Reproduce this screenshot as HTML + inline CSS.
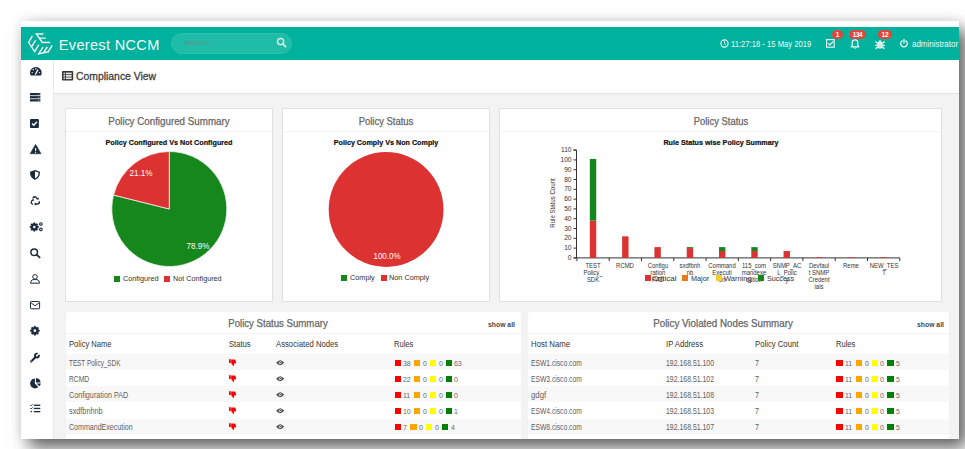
<!DOCTYPE html>
<html><head><meta charset="utf-8"><style>
*{box-sizing:border-box;margin:0;padding:0}
html,body{width:965px;height:449px;overflow:hidden;background:#fff;font-family:"Liberation Sans",sans-serif}
.a{position:absolute}
.nw{white-space:nowrap}
svg.a{overflow:visible}
</style></head><body>
<div class="a" style="left:21px;top:21px;width:938px;height:418px;background:#f3f3f3;box-shadow:8px 9px 16px rgba(0,0,0,0.6),0 0 12px rgba(0,0,0,0.10)"></div>
<div class="a" style="left:21px;top:21px;width:938px;height:6px;background:#fff"></div>
<div class="a" style="left:21px;top:27px;width:938px;height:33px;background:#00b19d"></div>
<div class="a" style="left:21px;top:60px;width:33px;height:379px;background:#fff;border-right:1px solid #e9e9e9"></div>
<div class="a" style="left:54px;top:60px;width:905px;height:34px;background:#fff;border-bottom:1px solid #e3e3e3"></div>
<svg class="a" style="left:26px;top:31px" width="28" height="26" viewBox="0 0 484 449">
 <g fill="none" stroke="#2a5f8a" stroke-width="14" stroke-linecap="butt" opacity=".55">
  <path d="M184 70 L292 214 H410"/>
  <path d="M58 212 L160 365"/>
 </g>
 <g fill="none" stroke="#f4f0f0" stroke-width="24" stroke-linecap="square" stroke-linejoin="miter">
  <path d="M178 52 H290 M178 52 L282 198 H405 M228 122 H330"/>
  <path d="M105 95 L45 200 L150 355 M95 275 L160 170 M150 355 L215 245"/>
  <path d="M215 398 L385 358 M215 398 L290 288 M300 378 L362 285 M385 358 L448 258"/>
 </g>
</svg>
<div class="a nw" style="left:58.8px;top:36px;font-size:14.6px;line-height:18px;color:#f4fbfa;letter-spacing:.29px">Everest NCCM</div>
<div class="a" style="left:171px;top:33px;width:121px;height:21px;border-radius:11px;background:#1fbca8;border:1px solid #2cc2ae"></div>
<div class="a nw" style="left:184px;top:37px;font-size:7.8px;line-height:11px;color:#5f948b">Search...</div>
<svg class="a" style="left:276px;top:37px" width="11" height="11" viewBox="0 0 11 11"><circle cx="4.6" cy="4.6" r="3.1" fill="none" stroke="#cdeee8" stroke-width="1.5"/><path d="M6.8 6.8 L9.6 9.6" stroke="#cdeee8" stroke-width="1.9" stroke-linecap="round"/></svg>
<svg class="a" style="left:720px;top:39px" width="9" height="9" viewBox="0 0 9 9"><circle cx="4.5" cy="4.5" r="3.6" fill="none" stroke="#eef8f6" stroke-width="1.1"/><path d="M4.5 2.3 V4.7 L6 5.9" fill="none" stroke="#eef8f6" stroke-width="1"/></svg>
<div class="a nw" style="left:731px;top:38.5px;font-size:9px;line-height:10px;color:#eef8f6;transform:scaleX(.85);transform-origin:0 0">11:27:18 - 15 May 2019</div>
<svg class="a" style="left:826.3px;top:39px" width="9" height="9" viewBox="0 0 9 9"><rect x=".6" y=".6" width="7.6" height="7.6" fill="none" stroke="#eef8f6" stroke-width="1.1"/><path d="M2.2 4.3 L3.9 5.8 L7.2 2.4" fill="none" stroke="#eef8f6" stroke-width="1.2"/></svg>
<div class="a" style="left:832px;top:30px;width:11px;height:9px;border-radius:5px;background:#e2463a;color:#fff;font-size:6.5px;line-height:9px;text-align:center;font-weight:700">1</div>
<svg class="a" style="left:850px;top:38.5px" width="10" height="10" viewBox="0 0 10 10"><path d="M1.2 7.8 H8.8 L7.8 6.4 V3.8 A2.8 3 0 0 0 2.2 3.8 V6.4 Z" fill="none" stroke="#eef8f6" stroke-width="1.2" stroke-linejoin="round"/><path d="M3.9 8.6 A1.2 1.2 0 0 0 6.1 8.6" fill="none" stroke="#eef8f6" stroke-width="1"/></svg>
<div class="a nw" style="left:849px;top:30px;width:17px;height:9px;border-radius:5px;background:#e2463a;color:#fff;font-size:6.3px;line-height:9px;text-align:center;letter-spacing:-.4px;font-weight:700">134</div>
<svg class="a" style="left:874.5px;top:38.5px" width="10" height="10" viewBox="0 0 10 10"><g fill="#eef8f6"><path d="M2.3 4.2 Q2.3 3 3.6 3 H6.4 Q7.7 3 7.7 4.2 V7.4 Q7.7 9.6 5 9.6 Q2.3 9.6 2.3 7.4 Z"/><path d="M3.2 2.7 Q5 0 6.8 2.7 Z"/></g><g stroke="#eef8f6" stroke-width="1.3"><path d="M0.4 2.6 L2.4 4.2 M9.6 2.6 L7.6 4.2 M0 6.3 H2.4 M10 6.3 H7.6 M0.5 9.6 L2.6 8.2 M9.5 9.6 L7.4 8.2"/></g><path d="M5 4.4 V9.2" stroke="#7fd3c7" stroke-width=".8"/></svg>
<div class="a" style="left:878px;top:30px;width:14px;height:9px;border-radius:5px;background:#e2463a;color:#fff;font-size:6.5px;line-height:9px;text-align:center;font-weight:700">12</div>
<svg class="a" style="left:899px;top:38.2px" width="10" height="10" viewBox="0 0 10 10"><path d="M3.1 2.9 A3.3 3.3 0 1 0 6.9 2.9" fill="none" stroke="#eef8f6" stroke-width="1.3" stroke-linecap="round"/><path d="M5 1.6 V4.9" stroke="#eef8f6" stroke-width="1.3" stroke-linecap="round"/></svg>
<div class="a nw" style="left:912px;top:38.7px;font-size:9px;line-height:10px;color:#eef8f6;transform:scaleX(.885);transform-origin:0 0">administrator</div>
<svg class="a" style="left:29.75px;top:67.1px" width="11.65" height="8.5" viewBox="0 0 11.65 8.5"><path d="M0.72 8.5 A5.8 5.8 0 1 1 10.98 8.5 Z" fill="#1c2b3b"/><g fill="#fff"><circle cx="2.2" cy="5.6" r=".7"/><circle cx="3.2" cy="2.8" r=".7"/><circle cx="5.85" cy="1.7" r=".7"/><circle cx="9.5" cy="5.6" r=".7"/></g><path d="M5.3 7.6 L8 2.6" stroke="#fff" stroke-width="1.2"/></svg>
<svg class="a" style="left:29.75px;top:93px" width="10.35" height="8.5" viewBox="0 0 10.35 8.5"><g fill="#1c2b3b"><rect x="0" y="0" width="10.35" height="2.3"/><rect x="0" y="3.1" width="10.35" height="2.3"/><rect x="0" y="6.2" width="10.35" height="2.3"/></g><g fill="#9aa3ad"><rect x="8.2" y=".7" width="1" height="1"/><rect x="8.2" y="3.8" width="1" height="1"/><rect x="8.2" y="6.9" width="1" height="1"/></g></svg>
<svg class="a" style="left:30px;top:119px" width="8.9" height="8.9" viewBox="0 0 8.9 8.9"><rect x="0" y="0" width="8.9" height="8.9" rx="1" fill="#1c2b3b"/><path d="M2 4.5 L3.8 6.3 L7 2.8" fill="none" stroke="#fff" stroke-width="1.3"/></svg>
<svg class="a" style="left:30px;top:143.75px" width="11.2" height="10" viewBox="0 0 11.2 10"><path d="M5.6 0.3 L11.1 9.8 L0.1 9.8 Z" fill="#1c2b3b" stroke="#1c2b3b" stroke-width=".5" stroke-linejoin="round"/><rect x="5.05" y="4" width="1.1" height="3" fill="#fff"/><rect x="5.05" y="7.8" width="1.1" height="1.1" fill="#fff"/></svg>
<svg class="a" style="left:30.3px;top:169.9px" width="10" height="9.8" viewBox="0 0 10 9.8"><path d="M5 0.7 L9.3 2.2 Q9.4 7.2 5 9.2 Q0.6 7.2 0.7 2.2 Z" fill="none" stroke="#1c2b3b" stroke-width="1.3"/><path d="M5 0.7 L0.7 2.2 Q0.6 7.2 5 9.2 Z" fill="#1c2b3b"/></svg>
<svg class="a" style="left:30px;top:196.25px" width="10.3" height="9.4" viewBox="0 0 10.3 9.4"><g fill="none" stroke="#1c2b3b" stroke-width="1.3" stroke-linecap="round"><path d="M3 1.9 Q4.9 -0.6 6.8 2.3"/><path d="M2.1 4.6 Q0.1 6.9 2.4 8.1"/><path d="M5.8 8 H8 Q9.7 7.6 9.3 5.6"/></g><g fill="#1c2b3b"><path d="M6.0 2.5 L8.8 1.6 L8.3 4.3 Z"/><path d="M0.9 4.4 L3.5 2.5 L3.8 4.9 Z"/><path d="M6.0 6.4 L4.0 8 L6.0 9.6 Z"/></g></svg>
<svg class="a" style="left:29.75px;top:222.3px" width="12.75" height="9.5" viewBox="0 0 12.75 9.5"><path d="M3.22 1.88 L3.55 0.66 L5.05 0.66 L5.38 1.88 L5.74 2.03 L6.84 1.41 L7.89 2.46 L7.27 3.56 L7.42 3.92 L8.64 4.25 L8.64 5.75 L7.42 6.08 L7.27 6.44 L7.89 7.54 L6.84 8.59 L5.74 7.97 L5.38 8.12 L5.05 9.34 L3.55 9.34 L3.22 8.12 L2.86 7.97 L1.76 8.59 L0.71 7.54 L1.33 6.44 L1.18 6.08 L-0.04 5.75 L-0.04 4.25 L1.18 3.92 L1.33 3.56 L0.71 2.46 L1.76 1.41 L2.86 2.03 Z" fill="#1c2b3b" stroke="#1c2b3b" stroke-width=".4" stroke-linejoin="round"/><circle cx="4.3" cy="5.0" r="1.2" fill="#fff"/><g fill="none" stroke="#1c2b3b" stroke-width="1.1"><circle cx="10.9" cy="2" r="1.3"/><circle cx="10.9" cy="7.4" r="1.3"/></g></svg>
<svg class="a" style="left:30px;top:247.9px" width="10.3" height="9.8" viewBox="0 0 10.3 9.8"><circle cx="4.2" cy="4.2" r="3.3" fill="none" stroke="#1c2b3b" stroke-width="1.5"/><path d="M6.6 6.6 L9.6 9.3" stroke="#1c2b3b" stroke-width="1.8" stroke-linecap="round"/></svg>
<svg class="a" style="left:30px;top:274px" width="10.1" height="9.8" viewBox="0 0 10.1 9.8"><g fill="none" stroke="#1c2b3b" stroke-width="1"><circle cx="5.05" cy="2.9" r="2.3"/><path d="M0.6 9.2 Q.6 6 3 5.6 H7.1 Q9.5 6 9.5 9.2 Z"/></g></svg>
<svg class="a" style="left:30px;top:300.8px" width="10.1" height="8.3" viewBox="0 0 10.1 8.3"><g fill="none" stroke="#1c2b3b" stroke-width="1"><rect x=".5" y=".5" width="9.1" height="7.3" rx=".8"/><path d="M.8 1.6 L5.05 4.8 L9.3 1.6"/></g></svg>
<svg class="a" style="left:30.3px;top:326.1px" width="9.8" height="9.4" viewBox="0 0 9.8 9.4"><path d="M3.77 1.39 L4.10 0.17 L5.70 0.17 L6.03 1.39 L6.44 1.56 L7.54 0.93 L8.67 2.06 L8.04 3.16 L8.21 3.57 L9.43 3.90 L9.43 5.50 L8.21 5.83 L8.04 6.24 L8.67 7.34 L7.54 8.47 L6.44 7.84 L6.03 8.01 L5.70 9.23 L4.10 9.23 L3.77 8.01 L3.36 7.84 L2.26 8.47 L1.13 7.34 L1.76 6.24 L1.59 5.83 L0.37 5.50 L0.37 3.90 L1.59 3.57 L1.76 3.16 L1.13 2.06 L2.26 0.93 L3.36 1.56 Z" fill="#1c2b3b" stroke="#1c2b3b" stroke-width=".4" stroke-linejoin="round"/><circle cx="4.9" cy="4.7" r="1.4" fill="#fff"/></svg>
<svg class="a" style="left:30px;top:351.6px" width="10.1" height="10.7" viewBox="0 0 10.1 10.7"><path d="M1.1 9.6 L5.6 5.1" stroke="#1c2b3b" stroke-width="2.1" stroke-linecap="round"/><circle cx="6.9" cy="3.6" r="2.9" fill="#1c2b3b"/><path d="M6.9 3.6 L8.6 -0.2 L10.9 1.9 Z" fill="#fff"/><circle cx="6.9" cy="3.6" r="1.0" fill="#fff"/><circle cx="1.4" cy="9.3" r=".45" fill="#fff"/></svg>
<svg class="a" style="left:30px;top:377.75px" width="11.2" height="10.35" viewBox="0 0 11.2 10.35"><path d="M4.9 0.6 V5.6 L8.3 9.1 A4.9 4.9 0 1 1 4.9 0.6 Z" fill="#1c2b3b"/><path d="M6 0 A5 5 0 0 1 10.6 4.4 H6 Z" fill="#1c2b3b"/><path d="M6.6 5.6 L10.9 5.6 A5 5 0 0 1 9.3 8.3 Z" fill="#1c2b3b"/></svg>
<svg class="a" style="left:30px;top:403.9px" width="10.3" height="8.5" viewBox="0 0 10.3 8.5"><g fill="none" stroke="#1c2b3b" stroke-width=".9"><path d="M.3 1 L1.1 1.8 L2.6 .2"/><path d="M.3 4.2 L1.1 5 L2.6 3.4"/></g><circle cx="1.3" cy="7.6" r=".8" fill="#1c2b3b"/><g fill="#1c2b3b"><rect x="3.8" y=".6" width="6.5" height="1.3"/><rect x="3.8" y="3.8" width="6.5" height="1.3"/><rect x="3.8" y="7" width="6.5" height="1.3"/></g></svg>
<svg class="a" style="left:62.4px;top:71.1px" width="11.2" height="9.6" viewBox="0 0 11.2 9.6"><rect x="0" y="0" width="11.2" height="9.6" rx="1" fill="#333"/><g fill="#e4e4e4"><rect x="1.5" y="1.6" width="1.4" height="1.7"/><rect x="1.5" y="4.0" width="1.4" height="1.7"/><rect x="1.5" y="6.4" width="1.4" height="1.7"/><rect x="3.8" y="1.6" width="5.9" height="1.7"/><rect x="3.8" y="4.0" width="5.9" height="1.7"/><rect x="3.8" y="6.4" width="5.9" height="1.7"/></g></svg>
<div class="a nw" style="left:75.5px;top:70.4px;font-size:10.6px;line-height:12px;color:#3e3e3e;transform:scaleX(0.9809);transform-origin:0 0;-webkit-text-stroke:.3px #3e3e3e">Compliance View</div>
<div class="a" style="left:65px;top:108px;width:208px;height:194px;background:#fff;border:1px solid #e1e1e1;"></div>
<div class="a" style="left:66px;top:131px;width:206px;height:1px;background:#f3f3f3"></div>
<div class="a" style="left:282px;top:108px;width:208px;height:194px;background:#fff;border:1px solid #e1e1e1;"></div>
<div class="a" style="left:283px;top:131px;width:206px;height:1px;background:#f3f3f3"></div>
<div class="a" style="left:499px;top:108px;width:443px;height:194px;background:#fff;border:1px solid #e1e1e1;"></div>
<div class="a" style="left:500px;top:131px;width:441px;height:1px;background:#f3f3f3"></div>
<div class="a nw" style="left:19.25px;top:116.08px;width:300px;text-align:center;font-size:10.2px;line-height:12.239999999999998px;color:#666;font-weight:400;transform:scaleX(0.9603959905952234);-webkit-text-stroke:.25px #666;">Policy Configured Summary</div>
<div class="a nw" style="left:236.39999999999998px;top:116.08px;width:300px;text-align:center;font-size:10.2px;line-height:12.239999999999998px;color:#666;font-weight:400;transform:scaleX(0.9265481560095515);-webkit-text-stroke:.25px #666;">Policy Status</div>
<div class="a nw" style="left:570.5px;top:116.08px;width:300px;text-align:center;font-size:10.2px;line-height:12.239999999999998px;color:#666;font-weight:400;transform:scaleX(0.9265481560095515);-webkit-text-stroke:.25px #666;">Policy Status</div>
<div class="a nw" style="left:18.5px;top:138.68px;width:300px;text-align:center;font-size:7.2px;line-height:8.64px;color:#111;font-weight:700;transform:scaleX(1.0035250555418416);-webkit-text-stroke:.2px #111;">Policy Configured Vs Not Configured</div>
<div class="a nw" style="left:236px;top:138.68px;width:300px;text-align:center;font-size:7.2px;line-height:8.64px;color:#111;font-weight:700;transform:scaleX(0.9990383753919666);-webkit-text-stroke:.2px #111;">Policy Comply Vs Non Comply</div>
<div class="a nw" style="left:570.5px;top:138.68px;width:300px;text-align:center;font-size:7.2px;line-height:8.64px;color:#111;font-weight:700;transform:scaleX(1.0008094526687492);-webkit-text-stroke:.2px #111;">Rule Status wise Policy Summary</div>
<svg class="a" style="left:0;top:0" width="965" height="449" viewBox="0 0 965 449"><path d="M169.3 209.0 L169.3 151.5 A57.5 57.5 0 1 1 113.52 195.05 Z" fill="#15871c" stroke="#f0f0f0" stroke-width=".8"/><path d="M169.3 209.0 L113.52 195.05 A57.5 57.5 0 0 1 169.3 151.5 Z" fill="#dc3232" stroke="#f0f0f0" stroke-width=".8"/><circle cx="386.1" cy="209.5" r="57.4" fill="#dc3232"/></svg>
<div class="a nw" style="left:-9px;top:168.14px;width:300px;text-align:center;font-size:8.6px;line-height:10.319999999999999px;color:#fafafa;font-weight:400;transform:scaleX(0.9536410256410257);">21.1%</div>
<div class="a nw" style="left:47.80000000000001px;top:241.14px;width:300px;text-align:center;font-size:8.6px;line-height:10.319999999999999px;color:#fafafa;font-weight:400;transform:scaleX(0.9413333333333334);">78.9%</div>
<div class="a nw" style="left:236.5px;top:250.94px;width:300px;text-align:center;font-size:8.6px;line-height:10.319999999999999px;color:#fafafa;font-weight:400;transform:scaleX(0.9310182207931403);">100.0%</div>
<div class="a" style="left:114.2px;top:275.6px;width:6px;height:6px;background:#15871c"></div>
<div class="a nw" style="left:122.6px;top:274.58px;font-size:7.2px;line-height:8.64px;color:#333;font-weight:400;transform:scaleX(1.0104664593513994);transform-origin:0 50%;">Configured</div>
<div class="a" style="left:164px;top:275.6px;width:6px;height:6px;background:#dc3232"></div>
<div class="a nw" style="left:173.3px;top:274.58px;font-size:7.2px;line-height:8.64px;color:#333;font-weight:400;transform:scaleX(1.0061279896574014);transform-origin:0 50%;">Not Configured</div>
<div class="a" style="left:341px;top:275.3px;width:6px;height:6px;background:#15871c"></div>
<div class="a nw" style="left:350.2px;top:274.28px;font-size:7.2px;line-height:8.64px;color:#333;font-weight:400;transform:scaleX(1.014974358974359);transform-origin:0 50%;">Comply</div>
<div class="a" style="left:380.6px;top:275.3px;width:6px;height:6px;background:#dc3232"></div>
<div class="a nw" style="left:389.0px;top:274.28px;font-size:7.2px;line-height:8.64px;color:#333;font-weight:400;transform:scaleX(1.0149980244962467);transform-origin:0 50%;">Non Comply</div>
<svg class="a" style="left:0;top:0" width="965" height="449" viewBox="0 0 965 449"><path d="M573.5 150.10 H576.5 V257.90 H573.5" fill="none" stroke="#333" stroke-width="1"/><path d="M573.5 257.90 H576.5" stroke="#333" stroke-width="1"/><path d="M573.5 248.10 H576.5" stroke="#333" stroke-width="1"/><path d="M573.5 238.30 H576.5" stroke="#333" stroke-width="1"/><path d="M573.5 228.50 H576.5" stroke="#333" stroke-width="1"/><path d="M573.5 218.70 H576.5" stroke="#333" stroke-width="1"/><path d="M573.5 208.90 H576.5" stroke="#333" stroke-width="1"/><path d="M573.5 199.10 H576.5" stroke="#333" stroke-width="1"/><path d="M573.5 189.30 H576.5" stroke="#333" stroke-width="1"/><path d="M573.5 179.50 H576.5" stroke="#333" stroke-width="1"/><path d="M573.5 169.70 H576.5" stroke="#333" stroke-width="1"/><path d="M573.5 159.90 H576.5" stroke="#333" stroke-width="1"/><path d="M573.5 150.10 H576.5" stroke="#333" stroke-width="1"/><path d="M576.90 261.10 V257.90 H899.80 V261.10" fill="none" stroke="#333" stroke-width="1"/><path d="M609.19 257.90 V261.10" stroke="#333" stroke-width="1"/><path d="M641.48 257.90 V261.10" stroke="#333" stroke-width="1"/><path d="M673.77 257.90 V261.10" stroke="#333" stroke-width="1"/><path d="M706.06 257.90 V261.10" stroke="#333" stroke-width="1"/><path d="M738.35 257.90 V261.10" stroke="#333" stroke-width="1"/><path d="M770.64 257.90 V261.10" stroke="#333" stroke-width="1"/><path d="M802.93 257.90 V261.10" stroke="#333" stroke-width="1"/><path d="M835.22 257.90 V261.10" stroke="#333" stroke-width="1"/><path d="M867.51 257.90 V261.10" stroke="#333" stroke-width="1"/><rect x="589.84" y="220.66" width="6.4" height="37.24" fill="#dc3232"/><rect x="589.84" y="158.92" width="6.4" height="61.74" fill="#15871c"/><rect x="622.13" y="236.34" width="6.4" height="21.56" fill="#dc3232"/><rect x="654.42" y="247.12" width="6.4" height="10.78" fill="#dc3232"/><rect x="686.71" y="248.10" width="6.4" height="9.80" fill="#dc3232"/><rect x="686.71" y="247.12" width="6.4" height="0.98" fill="#15871c"/><rect x="719.00" y="251.04" width="6.4" height="6.86" fill="#dc3232"/><rect x="719.00" y="247.12" width="6.4" height="3.92" fill="#15871c"/><rect x="751.29" y="251.04" width="6.4" height="6.86" fill="#dc3232"/><rect x="751.29" y="247.12" width="6.4" height="3.92" fill="#15871c"/><rect x="783.58" y="251.04" width="6.4" height="6.86" fill="#dc3232"/><rect x="815.87" y="257.12" width="6.4" height="0.78" fill="#dc3232"/><rect x="848.16" y="257.31" width="6.4" height="0.59" fill="#dc3232"/><rect x="880.45" y="257.31" width="6.4" height="0.59" fill="#dc3232"/></svg>
<div class="a nw" style="left:522px;top:253.90px;width:49.5px;text-align:right;font-size:6.6px;line-height:8px;color:#333">0</div>
<div class="a nw" style="left:522px;top:244.10px;width:49.5px;text-align:right;font-size:6.6px;line-height:8px;color:#333">10</div>
<div class="a nw" style="left:522px;top:234.30px;width:49.5px;text-align:right;font-size:6.6px;line-height:8px;color:#333">20</div>
<div class="a nw" style="left:522px;top:224.50px;width:49.5px;text-align:right;font-size:6.6px;line-height:8px;color:#333">30</div>
<div class="a nw" style="left:522px;top:214.70px;width:49.5px;text-align:right;font-size:6.6px;line-height:8px;color:#333">40</div>
<div class="a nw" style="left:522px;top:204.90px;width:49.5px;text-align:right;font-size:6.6px;line-height:8px;color:#333">50</div>
<div class="a nw" style="left:522px;top:195.10px;width:49.5px;text-align:right;font-size:6.6px;line-height:8px;color:#333">60</div>
<div class="a nw" style="left:522px;top:185.30px;width:49.5px;text-align:right;font-size:6.6px;line-height:8px;color:#333">70</div>
<div class="a nw" style="left:522px;top:175.50px;width:49.5px;text-align:right;font-size:6.6px;line-height:8px;color:#333">80</div>
<div class="a nw" style="left:522px;top:165.70px;width:49.5px;text-align:right;font-size:6.6px;line-height:8px;color:#333">90</div>
<div class="a nw" style="left:522px;top:155.90px;width:49.5px;text-align:right;font-size:6.6px;line-height:8px;color:#333">100</div>
<div class="a nw" style="left:522px;top:146.10px;width:49.5px;text-align:right;font-size:6.6px;line-height:8px;color:#333">110</div>
<div class="a nw" style="left:513.1px;top:199.1px;width:80px;text-align:center;font-size:6.6px;line-height:8px;color:#333;transform:rotate(-90deg) scaleX(0.9249)">Rule Status Count</div>
<div class="a nw" style="left:443.04499999999996px;top:261.60px;width:300px;text-align:center;font-size:6.6px;line-height:8px;color:#333;font-weight:400;transform:scaleX(0.9);">TEST</div>
<div class="a nw" style="left:443.04499999999996px;top:268.60px;width:300px;text-align:center;font-size:6.6px;line-height:8px;color:#333;font-weight:400;transform:scaleX(0.9);">Policy_</div>
<div class="a nw" style="left:443.04499999999996px;top:275.60px;width:300px;text-align:center;font-size:6.6px;line-height:8px;color:#333;font-weight:400;transform:scaleX(0.9);">SDK</div>
<div class="a nw" style="left:475.33500000000004px;top:261.60px;width:300px;text-align:center;font-size:6.6px;line-height:8px;color:#333;font-weight:400;transform:scaleX(0.9);">RCMD</div>
<div class="a nw" style="left:507.625px;top:261.60px;width:300px;text-align:center;font-size:6.6px;line-height:8px;color:#333;font-weight:400;transform:scaleX(0.9);">Configu</div>
<div class="a nw" style="left:507.625px;top:268.60px;width:300px;text-align:center;font-size:6.6px;line-height:8px;color:#333;font-weight:400;transform:scaleX(0.9);">ration</div>
<div class="a nw" style="left:507.625px;top:275.60px;width:300px;text-align:center;font-size:6.6px;line-height:8px;color:#333;font-weight:400;transform:scaleX(0.9);">PAD</div>
<div class="a nw" style="left:539.915px;top:261.60px;width:300px;text-align:center;font-size:6.6px;line-height:8px;color:#333;font-weight:400;transform:scaleX(0.9);">sxdfbnh</div>
<div class="a nw" style="left:539.915px;top:268.60px;width:300px;text-align:center;font-size:6.6px;line-height:8px;color:#333;font-weight:400;transform:scaleX(0.9);">nb</div>
<div class="a nw" style="left:572.2049999999999px;top:261.60px;width:300px;text-align:center;font-size:6.6px;line-height:8px;color:#333;font-weight:400;transform:scaleX(0.9);">Command</div>
<div class="a nw" style="left:572.2049999999999px;top:268.60px;width:300px;text-align:center;font-size:6.6px;line-height:8px;color:#333;font-weight:400;transform:scaleX(0.9);">Executi</div>
<div class="a nw" style="left:572.2049999999999px;top:275.60px;width:300px;text-align:center;font-size:6.6px;line-height:8px;color:#333;font-weight:400;transform:scaleX(0.9);">on</div>
<div class="a nw" style="left:604.495px;top:261.60px;width:300px;text-align:center;font-size:6.6px;line-height:8px;color:#333;font-weight:400;transform:scaleX(0.9);">115_com</div>
<div class="a nw" style="left:604.495px;top:268.60px;width:300px;text-align:center;font-size:6.6px;line-height:8px;color:#333;font-weight:400;transform:scaleX(0.9);">mandexe</div>
<div class="a nw" style="left:604.495px;top:275.60px;width:300px;text-align:center;font-size:6.6px;line-height:8px;color:#333;font-weight:400;transform:scaleX(0.9);">cution</div>
<div class="a nw" style="left:636.785px;top:261.60px;width:300px;text-align:center;font-size:6.6px;line-height:8px;color:#333;font-weight:400;transform:scaleX(0.9);">SNMP_AC</div>
<div class="a nw" style="left:636.785px;top:268.60px;width:300px;text-align:center;font-size:6.6px;line-height:8px;color:#333;font-weight:400;transform:scaleX(0.9);">L_Polic</div>
<div class="a nw" style="left:636.785px;top:275.60px;width:300px;text-align:center;font-size:6.6px;line-height:8px;color:#333;font-weight:400;transform:scaleX(0.9);">y</div>
<div class="a nw" style="left:669.0749999999999px;top:261.60px;width:300px;text-align:center;font-size:6.6px;line-height:8px;color:#333;font-weight:400;transform:scaleX(0.9);">Devfaul</div>
<div class="a nw" style="left:669.0749999999999px;top:268.60px;width:300px;text-align:center;font-size:6.6px;line-height:8px;color:#333;font-weight:400;transform:scaleX(0.9);">t SNMP</div>
<div class="a nw" style="left:669.0749999999999px;top:275.60px;width:300px;text-align:center;font-size:6.6px;line-height:8px;color:#333;font-weight:400;transform:scaleX(0.9);">Credent</div>
<div class="a nw" style="left:669.0749999999999px;top:282.60px;width:300px;text-align:center;font-size:6.6px;line-height:8px;color:#333;font-weight:400;transform:scaleX(0.9);">ials</div>
<div class="a nw" style="left:701.365px;top:261.60px;width:300px;text-align:center;font-size:6.6px;line-height:8px;color:#333;font-weight:400;transform:scaleX(0.9);">Reme</div>
<div class="a nw" style="left:733.655px;top:261.60px;width:300px;text-align:center;font-size:6.6px;line-height:8px;color:#333;font-weight:400;transform:scaleX(0.9);">NEW_TES</div>
<div class="a nw" style="left:733.655px;top:268.60px;width:300px;text-align:center;font-size:6.6px;line-height:8px;color:#333;font-weight:400;transform:scaleX(0.9);">T</div>
<div class="a" style="left:645px;top:275.0px;width:6px;height:6px;background:#dc3232"></div>
<div class="a" style="left:682.1px;top:275.0px;width:6px;height:6px;background:#e8771e"></div>
<div class="a" style="left:715.7px;top:275.0px;width:6px;height:6px;background:#f5cf2a"></div>
<div class="a" style="left:757.7px;top:275.0px;width:6px;height:6px;background:#15871c"></div>
<div class="a nw" style="left:652.0px;top:273.50px;font-size:8px;line-height:9.6px;color:#333;font-weight:400;transform:scaleX(1.0060063897763578);transform-origin:0 50%;">Critical</div>
<div class="a nw" style="left:691.0px;top:273.50px;font-size:8px;line-height:9.6px;color:#333;font-weight:400;transform:scaleX(0.9042935206869633);transform-origin:0 50%;">Major</div>
<div class="a nw" style="left:724.0px;top:273.50px;font-size:8px;line-height:9.6px;color:#333;font-weight:400;transform:scaleX(0.9355932203389831);transform-origin:0 50%;">Warning</div>
<div class="a nw" style="left:767.0px;top:273.50px;font-size:8px;line-height:9.6px;color:#333;font-weight:400;transform:scaleX(0.8963307493540053);transform-origin:0 50%;">Success</div>
<div class="a" style="left:65.5px;top:311.5px;width:455.5px;height:127.5px;background:#fff;border-radius:2px 2px 0 0;box-shadow:0 0 1px rgba(0,0,0,.06)"></div>
<div class="a" style="left:65.5px;top:333px;width:455.5px;height:1px;background:#f3f3f3"></div>
<div class="a nw" style="left:127.60000000000002px;top:318.18px;width:300px;text-align:center;font-size:10.2px;line-height:12.239999999999998px;color:#666;font-weight:400;transform:scaleX(0.9454243323442136);-webkit-text-stroke:.25px #666;">Policy Status Summary</div>
<div class="a nw" style="left:487.8px;top:321.20px;font-size:7px;line-height:8.4px;color:#484848;font-weight:700;transform:scaleX(0.9746606334841628);transform-origin:0 50%;">show all</div>
<div class="a nw" style="left:69.0px;top:339.08px;font-size:9.2px;line-height:11.04px;color:#333;font-weight:400;transform:scaleX(0.825737655255983);transform-origin:0 50%;">Policy Name</div>
<div class="a nw" style="left:228.5px;top:339.08px;font-size:9.2px;line-height:11.04px;color:#333;font-weight:400;transform:scaleX(0.8327294541091782);transform-origin:0 50%;">Status</div>
<div class="a nw" style="left:275.5px;top:339.08px;font-size:9.2px;line-height:11.04px;color:#333;font-weight:400;transform:scaleX(0.8396962025316456);transform-origin:0 50%;">Associated Nodes</div>
<div class="a nw" style="left:394.0px;top:339.08px;font-size:9.2px;line-height:11.04px;color:#333;font-weight:400;transform:scaleX(0.8208510638297873);transform-origin:0 50%;">Rules</div>
<div class="a" style="left:65.5px;top:354.30px;width:455.5px;height:16.05px;background:#f8f8f8"></div>
<div class="a nw" style="left:69.0px;top:358.14px;font-size:8.6px;line-height:10.319999999999999px;color:#5e5e5e;font-weight:400;transform:scaleX(0.7393846844823715);transform-origin:0 50%;">TEST Policy_SDK</div>
<svg class="a" style="left:229px;top:358.70px" width="7.4" height="7.2" viewBox="0 0 7.4 7.2"><rect x="0" y=".2" width="1.8" height="3.8" fill="#f00"/><path d="M2.2 .4 H5.6 Q6.4 .4 6.5 1.2 L7.2 3.6 Q7.3 4.4 6.5 4.4 H4.9 L5.1 6.3 Q5 7.2 4.3 7 L2.2 4.3 Z" fill="#f00"/></svg>
<svg class="a" style="left:275.9px;top:359.50px" width="8.4" height="5.6" viewBox="0 0 8.4 5.6"><path d="M.2 2.8 Q4.2 -2.2 8.2 2.8 Q4.2 7.8 .2 2.8 Z" fill="#444"/><circle cx="4.2" cy="2.8" r="1.5" fill="#fff"/><circle cx="4.2" cy="2.8" r=".8" fill="#444"/></svg>
<div class="a" style="left:394.5px;top:359.7px;width:6.3px;height:6.3px;background:#ff0000"></div>
<div class="a nw" style="left:403.3px;top:358.70px;font-size:8px;line-height:9.6px;color:#666;font-weight:400;transform:scaleX(0.87);transform-origin:0 50%;">38</div>
<div class="a" style="left:414.1px;top:359.7px;width:6.3px;height:6.3px;background:#ffa500"></div>
<div class="a nw" style="left:422.90000000000003px;top:358.70px;font-size:8px;line-height:9.6px;color:#666;font-weight:400;transform:scaleX(0.87);transform-origin:0 50%;">0</div>
<div class="a" style="left:429.85px;top:359.7px;width:6.3px;height:6.3px;background:#ffff00"></div>
<div class="a nw" style="left:438.65000000000003px;top:358.70px;font-size:8px;line-height:9.6px;color:#666;font-weight:400;transform:scaleX(0.87);transform-origin:0 50%;">0</div>
<div class="a" style="left:445.6px;top:359.7px;width:6.3px;height:6.3px;background:#008000"></div>
<div class="a nw" style="left:454.40000000000003px;top:358.70px;font-size:8px;line-height:9.6px;color:#666;font-weight:400;transform:scaleX(0.87);transform-origin:0 50%;">63</div>
<div class="a nw" style="left:69.0px;top:374.19px;font-size:8.6px;line-height:10.319999999999999px;color:#5e5e5e;font-weight:400;transform:scaleX(0.7852606060606061);transform-origin:0 50%;">RCMD</div>
<svg class="a" style="left:229px;top:374.75px" width="7.4" height="7.2" viewBox="0 0 7.4 7.2"><rect x="0" y=".2" width="1.8" height="3.8" fill="#f00"/><path d="M2.2 .4 H5.6 Q6.4 .4 6.5 1.2 L7.2 3.6 Q7.3 4.4 6.5 4.4 H4.9 L5.1 6.3 Q5 7.2 4.3 7 L2.2 4.3 Z" fill="#f00"/></svg>
<svg class="a" style="left:275.9px;top:375.55px" width="8.4" height="5.6" viewBox="0 0 8.4 5.6"><path d="M.2 2.8 Q4.2 -2.2 8.2 2.8 Q4.2 7.8 .2 2.8 Z" fill="#444"/><circle cx="4.2" cy="2.8" r="1.5" fill="#fff"/><circle cx="4.2" cy="2.8" r=".8" fill="#444"/></svg>
<div class="a" style="left:394.5px;top:375.75px;width:6.3px;height:6.3px;background:#ff0000"></div>
<div class="a nw" style="left:403.3px;top:374.75px;font-size:8px;line-height:9.6px;color:#666;font-weight:400;transform:scaleX(0.87);transform-origin:0 50%;">22</div>
<div class="a" style="left:414.1px;top:375.75px;width:6.3px;height:6.3px;background:#ffa500"></div>
<div class="a nw" style="left:422.90000000000003px;top:374.75px;font-size:8px;line-height:9.6px;color:#666;font-weight:400;transform:scaleX(0.87);transform-origin:0 50%;">0</div>
<div class="a" style="left:429.85px;top:375.75px;width:6.3px;height:6.3px;background:#ffff00"></div>
<div class="a nw" style="left:438.65000000000003px;top:374.75px;font-size:8px;line-height:9.6px;color:#666;font-weight:400;transform:scaleX(0.87);transform-origin:0 50%;">0</div>
<div class="a" style="left:445.6px;top:375.75px;width:6.3px;height:6.3px;background:#008000"></div>
<div class="a nw" style="left:454.40000000000003px;top:374.75px;font-size:8px;line-height:9.6px;color:#666;font-weight:400;transform:scaleX(0.87);transform-origin:0 50%;">0</div>
<div class="a" style="left:65.5px;top:386.40px;width:455.5px;height:16.05px;background:#f8f8f8"></div>
<div class="a nw" style="left:69.0px;top:390.24px;font-size:8.6px;line-height:10.319999999999999px;color:#5e5e5e;font-weight:400;transform:scaleX(0.839796234772979);transform-origin:0 50%;">Configuration PAD</div>
<svg class="a" style="left:229px;top:390.80px" width="7.4" height="7.2" viewBox="0 0 7.4 7.2"><rect x="0" y=".2" width="1.8" height="3.8" fill="#f00"/><path d="M2.2 .4 H5.6 Q6.4 .4 6.5 1.2 L7.2 3.6 Q7.3 4.4 6.5 4.4 H4.9 L5.1 6.3 Q5 7.2 4.3 7 L2.2 4.3 Z" fill="#f00"/></svg>
<svg class="a" style="left:275.9px;top:391.60px" width="8.4" height="5.6" viewBox="0 0 8.4 5.6"><path d="M.2 2.8 Q4.2 -2.2 8.2 2.8 Q4.2 7.8 .2 2.8 Z" fill="#444"/><circle cx="4.2" cy="2.8" r="1.5" fill="#fff"/><circle cx="4.2" cy="2.8" r=".8" fill="#444"/></svg>
<div class="a" style="left:394.5px;top:391.8px;width:6.3px;height:6.3px;background:#ff0000"></div>
<div class="a nw" style="left:403.3px;top:390.80px;font-size:8px;line-height:9.6px;color:#666;font-weight:400;transform:scaleX(0.87);transform-origin:0 50%;">11</div>
<div class="a" style="left:414.1px;top:391.8px;width:6.3px;height:6.3px;background:#ffa500"></div>
<div class="a nw" style="left:422.90000000000003px;top:390.80px;font-size:8px;line-height:9.6px;color:#666;font-weight:400;transform:scaleX(0.87);transform-origin:0 50%;">0</div>
<div class="a" style="left:429.85px;top:391.8px;width:6.3px;height:6.3px;background:#ffff00"></div>
<div class="a nw" style="left:438.65000000000003px;top:390.80px;font-size:8px;line-height:9.6px;color:#666;font-weight:400;transform:scaleX(0.87);transform-origin:0 50%;">0</div>
<div class="a" style="left:445.6px;top:391.8px;width:6.3px;height:6.3px;background:#008000"></div>
<div class="a nw" style="left:454.40000000000003px;top:390.80px;font-size:8px;line-height:9.6px;color:#666;font-weight:400;transform:scaleX(0.87);transform-origin:0 50%;">0</div>
<div class="a nw" style="left:69.0px;top:406.29px;font-size:8.6px;line-height:10.319999999999999px;color:#5e5e5e;font-weight:400;transform:scaleX(0.848081922016542);transform-origin:0 50%;">sxdfbnhnb</div>
<svg class="a" style="left:229px;top:406.85px" width="7.4" height="7.2" viewBox="0 0 7.4 7.2"><rect x="0" y=".2" width="1.8" height="3.8" fill="#f00"/><path d="M2.2 .4 H5.6 Q6.4 .4 6.5 1.2 L7.2 3.6 Q7.3 4.4 6.5 4.4 H4.9 L5.1 6.3 Q5 7.2 4.3 7 L2.2 4.3 Z" fill="#f00"/></svg>
<svg class="a" style="left:275.9px;top:407.65px" width="8.4" height="5.6" viewBox="0 0 8.4 5.6"><path d="M.2 2.8 Q4.2 -2.2 8.2 2.8 Q4.2 7.8 .2 2.8 Z" fill="#444"/><circle cx="4.2" cy="2.8" r="1.5" fill="#fff"/><circle cx="4.2" cy="2.8" r=".8" fill="#444"/></svg>
<div class="a" style="left:394.5px;top:407.85px;width:6.3px;height:6.3px;background:#ff0000"></div>
<div class="a nw" style="left:403.3px;top:406.85px;font-size:8px;line-height:9.6px;color:#666;font-weight:400;transform:scaleX(0.87);transform-origin:0 50%;">10</div>
<div class="a" style="left:414.1px;top:407.85px;width:6.3px;height:6.3px;background:#ffa500"></div>
<div class="a nw" style="left:422.90000000000003px;top:406.85px;font-size:8px;line-height:9.6px;color:#666;font-weight:400;transform:scaleX(0.87);transform-origin:0 50%;">0</div>
<div class="a" style="left:429.85px;top:407.85px;width:6.3px;height:6.3px;background:#ffff00"></div>
<div class="a nw" style="left:438.65000000000003px;top:406.85px;font-size:8px;line-height:9.6px;color:#666;font-weight:400;transform:scaleX(0.87);transform-origin:0 50%;">0</div>
<div class="a" style="left:445.6px;top:407.85px;width:6.3px;height:6.3px;background:#008000"></div>
<div class="a nw" style="left:454.40000000000003px;top:406.85px;font-size:8px;line-height:9.6px;color:#666;font-weight:400;transform:scaleX(0.87);transform-origin:0 50%;">1</div>
<div class="a" style="left:65.5px;top:418.50px;width:455.5px;height:16.05px;background:#f8f8f8"></div>
<div class="a nw" style="left:69.0px;top:422.34px;font-size:8.6px;line-height:10.319999999999999px;color:#5e5e5e;font-weight:400;transform:scaleX(0.8223864324651726);transform-origin:0 50%;">CommandExecution</div>
<svg class="a" style="left:229px;top:422.90px" width="7.4" height="7.2" viewBox="0 0 7.4 7.2"><rect x="0" y=".2" width="1.8" height="3.8" fill="#f00"/><path d="M2.2 .4 H5.6 Q6.4 .4 6.5 1.2 L7.2 3.6 Q7.3 4.4 6.5 4.4 H4.9 L5.1 6.3 Q5 7.2 4.3 7 L2.2 4.3 Z" fill="#f00"/></svg>
<svg class="a" style="left:275.9px;top:423.70px" width="8.4" height="5.6" viewBox="0 0 8.4 5.6"><path d="M.2 2.8 Q4.2 -2.2 8.2 2.8 Q4.2 7.8 .2 2.8 Z" fill="#444"/><circle cx="4.2" cy="2.8" r="1.5" fill="#fff"/><circle cx="4.2" cy="2.8" r=".8" fill="#444"/></svg>
<div class="a" style="left:394.5px;top:423.9px;width:6.3px;height:6.3px;background:#ff0000"></div>
<div class="a nw" style="left:403.3px;top:422.90px;font-size:8px;line-height:9.6px;color:#666;font-weight:400;transform:scaleX(0.87);transform-origin:0 50%;">7</div>
<div class="a" style="left:410.25px;top:423.9px;width:6.3px;height:6.3px;background:#ffa500"></div>
<div class="a nw" style="left:419.05px;top:422.90px;font-size:8px;line-height:9.6px;color:#666;font-weight:400;transform:scaleX(0.87);transform-origin:0 50%;">0</div>
<div class="a" style="left:426.0px;top:423.9px;width:6.3px;height:6.3px;background:#ffff00"></div>
<div class="a nw" style="left:434.8px;top:422.90px;font-size:8px;line-height:9.6px;color:#666;font-weight:400;transform:scaleX(0.87);transform-origin:0 50%;">0</div>
<div class="a" style="left:441.75px;top:423.9px;width:6.3px;height:6.3px;background:#008000"></div>
<div class="a nw" style="left:450.55px;top:422.90px;font-size:8px;line-height:9.6px;color:#666;font-weight:400;transform:scaleX(0.87);transform-origin:0 50%;">4</div>
<div class="a" style="left:528.3px;top:311.5px;width:421px;height:127.5px;background:#fff;border-radius:2px 2px 0 0;box-shadow:0 0 1px rgba(0,0,0,.06)"></div>
<div class="a" style="left:528.3px;top:333px;width:421px;height:1px;background:#f3f3f3"></div>
<div class="a nw" style="left:572.85px;top:318.18px;width:300px;text-align:center;font-size:10.2px;line-height:12.239999999999998px;color:#666;font-weight:400;transform:scaleX(0.9609288325091377);-webkit-text-stroke:.25px #666;">Policy Violated Nodes Summary</div>
<div class="a nw" style="left:916.5px;top:321.20px;font-size:7px;line-height:8.4px;color:#484848;font-weight:700;transform:scaleX(0.9746606334841628);transform-origin:0 50%;">show all</div>
<div class="a nw" style="left:530.8px;top:339.08px;font-size:9.2px;line-height:11.04px;color:#333;font-weight:400;transform:scaleX(0.852825569534172);transform-origin:0 50%;">Host Name</div>
<div class="a nw" style="left:666.2px;top:339.08px;font-size:9.2px;line-height:11.04px;color:#333;font-weight:400;transform:scaleX(0.8356371337804447);transform-origin:0 50%;">IP Address</div>
<div class="a nw" style="left:754.8px;top:339.08px;font-size:9.2px;line-height:11.04px;color:#333;font-weight:400;transform:scaleX(0.8412481066343532);transform-origin:0 50%;">Policy Count</div>
<div class="a nw" style="left:835.7px;top:339.08px;font-size:9.2px;line-height:11.04px;color:#333;font-weight:400;transform:scaleX(0.8208510638297873);transform-origin:0 50%;">Rules</div>
<div class="a" style="left:528.3px;top:354.30px;width:421px;height:16.05px;background:#f8f8f8"></div>
<div class="a nw" style="left:530.8px;top:358.14px;font-size:8.6px;line-height:10.319999999999999px;color:#5e5e5e;font-weight:400;transform:scaleX(0.7812557132547511);transform-origin:0 50%;">ESW1.cisco.com</div>
<div class="a nw" style="left:666.2px;top:358.14px;font-size:8.6px;line-height:10.319999999999999px;color:#5e5e5e;font-weight:400;transform:scaleX(0.8041004184100419);transform-origin:0 50%;">192.168.51.100</div>
<div class="a nw" style="left:754.8px;top:358.14px;font-size:8.6px;line-height:10.319999999999999px;color:#5e5e5e;font-weight:400;transform:scaleX(0.8250980392156863);transform-origin:0 50%;">7</div>
<div class="a" style="left:836.3px;top:359.7px;width:6.3px;height:6.3px;background:#ff0000"></div>
<div class="a nw" style="left:845.0999999999999px;top:358.70px;font-size:8px;line-height:9.6px;color:#666;font-weight:400;transform:scaleX(0.87);transform-origin:0 50%;">11</div>
<div class="a" style="left:855.9px;top:359.7px;width:6.3px;height:6.3px;background:#ffa500"></div>
<div class="a nw" style="left:864.6999999999999px;top:358.70px;font-size:8px;line-height:9.6px;color:#666;font-weight:400;transform:scaleX(0.87);transform-origin:0 50%;">0</div>
<div class="a" style="left:871.65px;top:359.7px;width:6.3px;height:6.3px;background:#ffff00"></div>
<div class="a nw" style="left:880.4499999999999px;top:358.70px;font-size:8px;line-height:9.6px;color:#666;font-weight:400;transform:scaleX(0.87);transform-origin:0 50%;">0</div>
<div class="a" style="left:887.4px;top:359.7px;width:6.3px;height:6.3px;background:#008000"></div>
<div class="a nw" style="left:896.1999999999999px;top:358.70px;font-size:8px;line-height:9.6px;color:#666;font-weight:400;transform:scaleX(0.87);transform-origin:0 50%;">5</div>
<div class="a nw" style="left:530.8px;top:374.19px;font-size:8.6px;line-height:10.319999999999999px;color:#5e5e5e;font-weight:400;transform:scaleX(0.7812557132547511);transform-origin:0 50%;">ESW3.cisco.com</div>
<div class="a nw" style="left:666.2px;top:374.19px;font-size:8.6px;line-height:10.319999999999999px;color:#5e5e5e;font-weight:400;transform:scaleX(0.8041004184100419);transform-origin:0 50%;">192.168.51.102</div>
<div class="a nw" style="left:754.8px;top:374.19px;font-size:8.6px;line-height:10.319999999999999px;color:#5e5e5e;font-weight:400;transform:scaleX(0.8250980392156863);transform-origin:0 50%;">7</div>
<div class="a" style="left:836.3px;top:375.75px;width:6.3px;height:6.3px;background:#ff0000"></div>
<div class="a nw" style="left:845.0999999999999px;top:374.75px;font-size:8px;line-height:9.6px;color:#666;font-weight:400;transform:scaleX(0.87);transform-origin:0 50%;">11</div>
<div class="a" style="left:855.9px;top:375.75px;width:6.3px;height:6.3px;background:#ffa500"></div>
<div class="a nw" style="left:864.6999999999999px;top:374.75px;font-size:8px;line-height:9.6px;color:#666;font-weight:400;transform:scaleX(0.87);transform-origin:0 50%;">0</div>
<div class="a" style="left:871.65px;top:375.75px;width:6.3px;height:6.3px;background:#ffff00"></div>
<div class="a nw" style="left:880.4499999999999px;top:374.75px;font-size:8px;line-height:9.6px;color:#666;font-weight:400;transform:scaleX(0.87);transform-origin:0 50%;">0</div>
<div class="a" style="left:887.4px;top:375.75px;width:6.3px;height:6.3px;background:#008000"></div>
<div class="a nw" style="left:896.1999999999999px;top:374.75px;font-size:8px;line-height:9.6px;color:#666;font-weight:400;transform:scaleX(0.87);transform-origin:0 50%;">5</div>
<div class="a" style="left:528.3px;top:386.40px;width:421px;height:16.05px;background:#f8f8f8"></div>
<div class="a nw" style="left:530.8px;top:390.24px;font-size:8.6px;line-height:10.319999999999999px;color:#5e5e5e;font-weight:400;transform:scaleX(0.9050233426704015);transform-origin:0 50%;">gdgf</div>
<div class="a nw" style="left:666.2px;top:390.24px;font-size:8.6px;line-height:10.319999999999999px;color:#5e5e5e;font-weight:400;transform:scaleX(0.8041004184100419);transform-origin:0 50%;">192.168.51.108</div>
<div class="a nw" style="left:754.8px;top:390.24px;font-size:8.6px;line-height:10.319999999999999px;color:#5e5e5e;font-weight:400;transform:scaleX(0.8250980392156863);transform-origin:0 50%;">7</div>
<div class="a" style="left:836.3px;top:391.8px;width:6.3px;height:6.3px;background:#ff0000"></div>
<div class="a nw" style="left:845.0999999999999px;top:390.80px;font-size:8px;line-height:9.6px;color:#666;font-weight:400;transform:scaleX(0.87);transform-origin:0 50%;">11</div>
<div class="a" style="left:855.9px;top:391.8px;width:6.3px;height:6.3px;background:#ffa500"></div>
<div class="a nw" style="left:864.6999999999999px;top:390.80px;font-size:8px;line-height:9.6px;color:#666;font-weight:400;transform:scaleX(0.87);transform-origin:0 50%;">0</div>
<div class="a" style="left:871.65px;top:391.8px;width:6.3px;height:6.3px;background:#ffff00"></div>
<div class="a nw" style="left:880.4499999999999px;top:390.80px;font-size:8px;line-height:9.6px;color:#666;font-weight:400;transform:scaleX(0.87);transform-origin:0 50%;">0</div>
<div class="a" style="left:887.4px;top:391.8px;width:6.3px;height:6.3px;background:#008000"></div>
<div class="a nw" style="left:896.1999999999999px;top:390.80px;font-size:8px;line-height:9.6px;color:#666;font-weight:400;transform:scaleX(0.87);transform-origin:0 50%;">5</div>
<div class="a nw" style="left:530.8px;top:406.29px;font-size:8.6px;line-height:10.319999999999999px;color:#5e5e5e;font-weight:400;transform:scaleX(0.7812557132547511);transform-origin:0 50%;">ESW4.cisco.com</div>
<div class="a nw" style="left:666.2px;top:406.29px;font-size:8.6px;line-height:10.319999999999999px;color:#5e5e5e;font-weight:400;transform:scaleX(0.8041004184100419);transform-origin:0 50%;">192.168.51.103</div>
<div class="a nw" style="left:754.8px;top:406.29px;font-size:8.6px;line-height:10.319999999999999px;color:#5e5e5e;font-weight:400;transform:scaleX(0.8250980392156863);transform-origin:0 50%;">7</div>
<div class="a" style="left:836.3px;top:407.85px;width:6.3px;height:6.3px;background:#ff0000"></div>
<div class="a nw" style="left:845.0999999999999px;top:406.85px;font-size:8px;line-height:9.6px;color:#666;font-weight:400;transform:scaleX(0.87);transform-origin:0 50%;">11</div>
<div class="a" style="left:855.9px;top:407.85px;width:6.3px;height:6.3px;background:#ffa500"></div>
<div class="a nw" style="left:864.6999999999999px;top:406.85px;font-size:8px;line-height:9.6px;color:#666;font-weight:400;transform:scaleX(0.87);transform-origin:0 50%;">0</div>
<div class="a" style="left:871.65px;top:407.85px;width:6.3px;height:6.3px;background:#ffff00"></div>
<div class="a nw" style="left:880.4499999999999px;top:406.85px;font-size:8px;line-height:9.6px;color:#666;font-weight:400;transform:scaleX(0.87);transform-origin:0 50%;">0</div>
<div class="a" style="left:887.4px;top:407.85px;width:6.3px;height:6.3px;background:#008000"></div>
<div class="a nw" style="left:896.1999999999999px;top:406.85px;font-size:8px;line-height:9.6px;color:#666;font-weight:400;transform:scaleX(0.87);transform-origin:0 50%;">5</div>
<div class="a" style="left:528.3px;top:418.50px;width:421px;height:16.05px;background:#f8f8f8"></div>
<div class="a nw" style="left:530.8px;top:422.34px;font-size:8.6px;line-height:10.319999999999999px;color:#5e5e5e;font-weight:400;transform:scaleX(0.7812557132547511);transform-origin:0 50%;">ESW8.cisco.com</div>
<div class="a nw" style="left:666.2px;top:422.34px;font-size:8.6px;line-height:10.319999999999999px;color:#5e5e5e;font-weight:400;transform:scaleX(0.8041004184100419);transform-origin:0 50%;">192.168.51.107</div>
<div class="a nw" style="left:754.8px;top:422.34px;font-size:8.6px;line-height:10.319999999999999px;color:#5e5e5e;font-weight:400;transform:scaleX(0.8250980392156863);transform-origin:0 50%;">7</div>
<div class="a" style="left:836.3px;top:423.9px;width:6.3px;height:6.3px;background:#ff0000"></div>
<div class="a nw" style="left:845.0999999999999px;top:422.90px;font-size:8px;line-height:9.6px;color:#666;font-weight:400;transform:scaleX(0.87);transform-origin:0 50%;">11</div>
<div class="a" style="left:855.9px;top:423.9px;width:6.3px;height:6.3px;background:#ffa500"></div>
<div class="a nw" style="left:864.6999999999999px;top:422.90px;font-size:8px;line-height:9.6px;color:#666;font-weight:400;transform:scaleX(0.87);transform-origin:0 50%;">0</div>
<div class="a" style="left:871.65px;top:423.9px;width:6.3px;height:6.3px;background:#ffff00"></div>
<div class="a nw" style="left:880.4499999999999px;top:422.90px;font-size:8px;line-height:9.6px;color:#666;font-weight:400;transform:scaleX(0.87);transform-origin:0 50%;">0</div>
<div class="a" style="left:887.4px;top:423.9px;width:6.3px;height:6.3px;background:#008000"></div>
<div class="a nw" style="left:896.1999999999999px;top:422.90px;font-size:8px;line-height:9.6px;color:#666;font-weight:400;transform:scaleX(0.87);transform-origin:0 50%;">5</div>
</body></html>
